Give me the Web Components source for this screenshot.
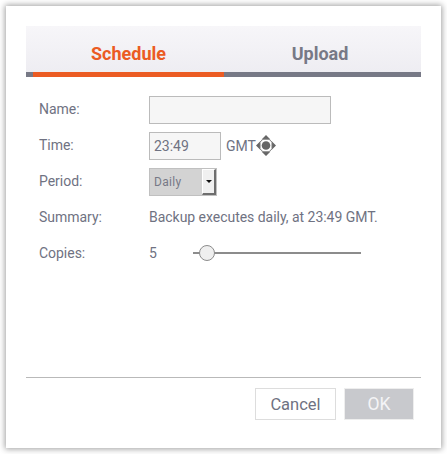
<!DOCTYPE html>
<html><head><meta charset="utf-8">
<style>
html,body{margin:0;padding:0;background:#fff}
body{width:447px;height:454px;overflow:hidden;font-family:Roboto,sans-serif;padding:6px;box-sizing:border-box}
</style></head><body>
<backup-dialog>
  <tab-bar slot="tabs"></tab-bar>
  <form-row label="Name:"><text-box style="width:182px"></text-box></form-row>
  <form-row label="Time:"><text-box style="width:72px" value="23:49"></text-box><span style="margin-left:5px">GMT</span><move-cursor></move-cursor></form-row>
  <form-row label="Period:"><drop-down value="Daily"></drop-down></form-row>
  <form-row label="Summary:"><span style="padding-bottom:2px">Backup executes daily, at 23:49 GMT.</span></form-row>
  <form-row label="Copies:"><span style="width:44px;padding-bottom:2px">5</span><range-slider></range-slider></form-row>
  <dialog-button slot="actions" style="width:81px;font-size:16.5px">Cancel</dialog-button>
  <dialog-button slot="actions" primary style="width:70px;font-size:17.5px">OK</dialog-button>
</backup-dialog>
<script>
function def(name,html){
  customElements.define(name,class extends HTMLElement{
    connectedCallback(){
      if(this.shadowRoot)return;
      const r=this.attachShadow({mode:'open'});
      r.innerHTML=typeof html==='function'?html(this):html;
    }
  });
}
def('backup-dialog',`<style>
:host{display:flex;flex-direction:column;width:435px;height:442px;box-sizing:border-box;padding:20px 20px 0;background:#fff;box-shadow:0 0 6px 1px rgba(0,0,0,.38);color:#6f7282;font-size:14px;letter-spacing:-.03px}
.form{display:flex;flex-direction:column;gap:8px;padding:19px 0 0 13px;flex:1}
.foot{display:flex;justify-content:flex-end;gap:8px;border-top:1px solid #b9b9b9;margin-bottom:28px;padding:10px 7px 0 0}
</style><slot name="tabs"></slot><div class="form"><slot></slot></div><div class="foot"><slot name="actions"></slot></div>`);
def('tab-bar',`<style>
:host{display:flex;height:51px;box-sizing:border-box;padding:0 5px 0 7px;border-bottom:5px solid #777986;background:linear-gradient(#f7f6f9,#eeedf2);font-size:18px;font-weight:700;letter-spacing:0}
.t{width:191px;height:46px;box-sizing:border-box;display:flex;align-items:center;justify-content:center;padding-top:9px;color:#777986}
.u{width:192px}
.a{color:#eb5b23;box-shadow:0 5px 0 #eb5b23}
</style><div class="t a">Schedule</div><div class="t u">Upload</div>`);
def('form-row',h=>`<style>
:host{display:flex;align-items:center;height:28px}
.l{width:110px;flex:none;padding-bottom:2px}
.c{display:flex;align-items:center}
</style><div class="l">${h.getAttribute('label')}</div><div class="c"><slot></slot></div>`);
def('text-box',h=>`<style>
:host{display:flex;align-items:center;height:28px;box-sizing:border-box;border:1px solid #bbb;background:#f6f6f6;padding-left:4px;color:#6f7282}
</style>${h.getAttribute('value')||''}`);
def('drop-down',h=>`<style>
:host{display:flex;width:68px;height:28px;box-sizing:border-box;border:1px solid #c0c0c0;background:#d3d3d3;font-size:12px;color:#777986;align-items:center;padding:0 0 0 4px;justify-content:space-between;letter-spacing:.3px}
.b{width:14px;height:26px;box-sizing:border-box;background:#f0f0f0;border-right:2px solid #6e6e6e;border-bottom:2px solid #6e6e6e;border-left:1px solid #fff;border-top:1px solid #fff;display:flex;align-items:center;justify-content:center}
.b i{width:0;height:0;border:3px solid transparent;border-top:3px solid #111;border-bottom:0;display:block}
</style>${h.getAttribute('value')}<div class="b"><i></i></div>`);
def('move-cursor',`<style>:host{display:block;width:20px;height:21px;margin:0 0 1px 0}svg{display:block}</style>
<svg width="20" height="21" viewBox="0 0 20 21"><path d="M10 0 14.5 4.5H5.5ZM10 21 5.5 16.5H14.5ZM0 10.5 4.5 6V15ZM20 10.5 15.5 15V6Z" fill="#666"/><path d="M7 4.2H13L16 7.2V13.8L13 16.8H7L4 13.8V7.2Z" fill="#fff" stroke="#777" stroke-width="1"/><circle cx="10" cy="10.5" r="4.3" fill="#666"/></svg>`);
def('range-slider',`<style>:host{display:block;position:relative;width:168px;height:18px;margin-bottom:2px}
.t{position:absolute;left:0;right:0;top:8px;height:2px;background:#8c8c8c}
.k{position:absolute;left:6px;top:1px;width:16px;height:16px;box-sizing:border-box;border:1px solid #8c8c8c;border-radius:50%;background:#efefef}
</style><div class="t"></div><div class="k"></div>`);
def('dialog-button',h=>`<style>
:host{display:flex;align-items:center;justify-content:center;height:32px;box-sizing:border-box;border:1px solid ${h.hasAttribute('primary')?'#eee':'#ddd'};background:${h.hasAttribute('primary')?'#c8c9cd':'#fff'};color:${h.hasAttribute('primary')?'#f4f4f6':'#6f7282'};letter-spacing:0}
</style><slot></slot>`);
</script>
</body></html>
